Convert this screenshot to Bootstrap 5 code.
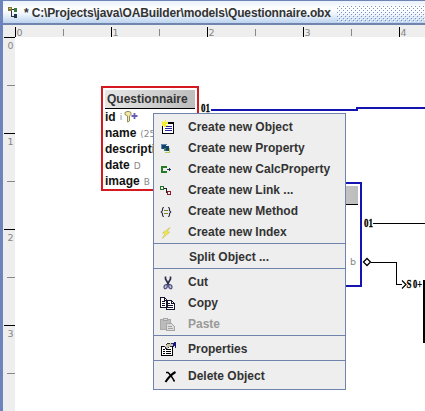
<!DOCTYPE html>
<html lang="en">
<head>
<meta charset="utf-8">
<title>Questionnaire.obx</title>
<link href="https://cdn.jsdelivr.net/npm/bootstrap@5.3.0/dist/css/bootstrap.min.css" rel="stylesheet">
<style>
body{width:425px;height:411px;font:bold 12px/15px "Liberation Sans",Arial,sans-serif;color:#333;background:#fff}
.frame{width:425px;height:411px;border-left:3px solid #6c83bd}
.titlebar{height:25px;border-top:1px solid #6f83b5;border-bottom:2px solid #7184ae;background:linear-gradient(#e9f2fd,#fff 35%,#eef4fc 60%,#bcd3ef);padding:2px 0 0 4px}
.titlebar span{margin-left:4px;white-space:pre;letter-spacing:-.15px}
.grip{margin-left:6px;height:19px}
.ruler-top{height:12px;background:#eee}
.ruler-left{width:12px;background:#eee}
svg{display:block;flex:none}
.num{font:9.5px "DejaVu Sans",sans-serif;fill:#858585}
.stage{background:#fff}
.entity{position:absolute;left:86px;top:49px;width:98px;height:105px;border:2px solid #d41a20;padding:2px 2px 0;color:#111}
.entity-head{height:19px;background:linear-gradient(100deg,#e7e7e7,#bcbcbc);border-bottom:1px solid #000;color:#333;padding:2px 0 0 2px}
.prop{height:16px;line-height:17px;white-space:nowrap}
.prop small{font:9px/17px "DejaVu Sans",sans-serif;color:#888;margin-left:4px}
.target{position:absolute;left:240px;top:145px;width:107px;height:105px;border:2px solid #1414b0;padding:2px 2px 0}
.links{position:absolute;left:0;top:0}
.role{font:bold 12px "Liberation Serif",serif;fill:#000;stroke:#000;stroke-width:.3px}
.ctx{position:absolute;left:138px;top:76px;width:193px;height:277px;border:1px solid #6f83ac;background:#eee;padding-top:3px}
.item{height:21px;padding:0 0 0 5px;white-space:nowrap}
.item svg{margin-right:11px;margin-left:1px;overflow:visible}
.rule{height:1px;background:#6f83ac;margin-bottom:3px}
.last-item{margin-top:5px}
.off{color:#999}
</style>
<script src="https://cdn.jsdelivr.net/npm/bootstrap@5.3.0/dist/js/bootstrap.bundle.min.js"></script>
</head>
<body class="m-0 overflow-hidden">
<div class="frame d-flex flex-column">
  <header class="titlebar d-flex align-items-center">
    <svg width="13" height="13" shape-rendering="crispEdges"><path d="M4 2.500H8M4.500 3V9.500H8" fill="none" stroke="#333"/><path fill="#7d7537" d="M1 0h4v4H1z"/><path fill="#397a42" d="M7 1h3v4H7z"/><path fill="#20364f" d="M7 7h3v4H7z"/><path fill="#d9b36c" d="M2 1h2v1H2z"/></svg>
    <span>* C:\Projects\java\OABuilder\models\Questionnaire.obx</span>
    <svg class="grip" width="94" height="19" shape-rendering="crispEdges"><defs><pattern id="dots" width="4" height="4" patternUnits="userSpaceOnUse"><path fill="#7a92c3" d="M0 0h1v1H0zM2 2h1v1H2z"/><path fill="#fff" d="M1 1h1v1H1zM3 3h1v1H3z"/></pattern></defs><path fill="url(#dots)" d="M0 1h94v17H0z"/></svg>
  </header>
  <div class="ruler-top">
    <svg width="422" height="12" shape-rendering="crispEdges"><path stroke="#000" d="M12.500 2V12M108.500 2V12M204.500 2V12M300.500 2V12M396.500 2V12"/><path stroke="#888" d="M60.500 4V11M156.500 4V11M252.500 4V11M348.500 4V11"/><g class="num"><text x="13.500" y="11">0</text><text x="109.500" y="11">1</text><text x="205.500" y="11">2</text><text x="301.500" y="11">3</text><text x="397.500" y="11">4</text></g></svg>
  </div>
  <div class="d-flex flex-grow-1">
    <div class="ruler-left">
      <svg width="12" height="374" shape-rendering="crispEdges"><path stroke="#000" d="M1 .5H12M1 96.500H12M1 192.500H12M1 288.500H12"/><path stroke="#888" d="M4 48.500H12M4 144.500H12M4 240.500H12M4 336.500H12"/><g class="num"><text x="4.500" y="12">0</text><text x="4.500" y="108">1</text><text x="4.500" y="204">2</text><text x="4.500" y="300">3</text></g></svg>
    </div>
    <main class="stage flex-grow-1 position-relative overflow-hidden">
      <section class="entity">
        <div class="entity-head">Questionnaire</div>
        <div class="prop d-flex">id <small>i</small><svg width="16" height="14"><path d="M3 3.500l2-1h2l2 1v2L7.500 7v5L5.500 13V7L3 5.500z" fill="#f1eaa5" stroke="#8a854f" stroke-width=".9"/><path d="M9.500 7h6M12.500 4v6" stroke="#6a60ad" stroke-width="1.800"/></svg></div>
        <div class="prop">name<small>(25</small></div>
        <div class="prop">description</div>
        <div class="prop">date<small>D</small></div>
        <div class="prop">image<small>B</small></div>
      </section>
      <section class="target"><div class="entity-head"></div></section>
      <svg class="links" width="410" height="374"><g fill="none" shape-rendering="crispEdges"><path stroke="#1414b0" stroke-width="2" d="M196 73H342V71H410"/><path stroke="#000" d="M358 186.500H410M356 225.500H381.500V247.500H387"/><path stroke="#000" stroke-width="2" d="M410 243.500H409V306"/></g><path fill="#fff" stroke="#000" stroke-width="1.300" d="M348.500 225l3.500-3.500 3.500 3.500-3.500 3.500z"/><path fill="none" stroke="#000" stroke-width="1.200" d="M387 243.500l4 4-4 4"/>
        <g class="role"><text x="186" y="75" textLength="9" lengthAdjust="spacingAndGlyphs">01</text><text x="349" y="190" textLength="9" lengthAdjust="spacingAndGlyphs">01</text><text x="391.500" y="251" textLength="5" lengthAdjust="spacingAndGlyphs">S</text><text x="398" y="251" textLength="9" lengthAdjust="spacingAndGlyphs">0+</text></g>
        <text class="num" x="335" y="228">b</text>
      </svg>
      <nav class="ctx">
        <div class="item d-flex align-items-center"><svg width="17" height="16" shape-rendering="crispEdges"><path fill="#fff" stroke="#000" d="M2.500 2.500h11v11h-11z"/><path fill="#000" d="M6 2h8v2H6z"/><path stroke="#2828a0" d="M5 6.500h7M5 8.500h7M5 10.500h7"/><path fill="#f2ef32" d="M2 1h1v1h2V0h1v2h2v2H6v1h2v1H6v1H4V6H2z"/></svg>Create new Object</div>
        <div class="item d-flex align-items-center"><svg width="17" height="16" shape-rendering="crispEdges"><path fill="none" stroke="#5b86b0" d="M1.500 8V3.500H7"/><path fill="none" stroke="#b7c654" d="M5 11.500h4.500V7"/><path fill="#153f6c" d="M2 4h4v1h3v5H4V8H2z"/><path fill="#3b8058" d="M4 7h2v3H4z"/></svg>Create new Property</div>
        <div class="item d-flex align-items-center"><svg width="17" height="16" shape-rendering="crispEdges"><path fill="none" stroke="#287b24" stroke-width="2" d="M7 5H2v5h5"/><path stroke="#1b385e" d="M7 7.500h4"/><path fill="#1b385e" d="M9 6h1v3H9z"/></svg>Create new CalcProperty</div>
        <div class="item d-flex align-items-center"><svg width="17" height="16" shape-rendering="crispEdges"><path fill="none" stroke="#222" d="M4 5.500h2.500v4H8"/><path fill="#eee" stroke="#227029" d="M.5 3.500h3v3h-3z"/><path fill="#eee" stroke="#8b1f2e" d="M7.500 8.500h3v3h-3z"/></svg>Create new Link ...</div>
        <div class="item d-flex align-items-center"><svg width="17" height="16"><path fill="none" stroke="#282840" stroke-width="1.100" d="M4 3.500Q2.500 3.500 2.500 5v1.500L1.200 8l1.300 1.500V11q0 1.500 1.500 1.500M8 3.500q1.500 0 1.500 1.500v1.500L10.800 8l-1.300 1.500V11q0 1.500-1.500 1.500"/><path stroke="#888238" d="M4 6.500h4M4 9.500h4"/></svg>Create new Method</div>
        <div class="item d-flex align-items-center"><svg width="17" height="16"><path fill="#f4ed4e" stroke="#c9bd54" stroke-width=".6" d="M10 2.500L2.500 8h2.800l-3 5.500 7.500-6.500H7l3-4.500z"/></svg>Create new Index</div>
        <div class="rule"></div>
        <div class="item d-flex align-items-center"><svg width="18" height="16"></svg>Split Object ...</div>
        <div class="rule"></div>
        <div class="item d-flex align-items-center"><svg width="17" height="16"><path fill="none" stroke="#30304e" stroke-width="1.700" d="M5.500 1.500v2.500L9 10M10.500 1.500v2.500L7 10"/><path fill="#c5c5dd" stroke="#4c4c7c" stroke-width="1.200" d="M7 9.500q-3 0-3 2.500t2 1.500 1-4zM9 9.500q3 0 3 2.500t-2 1.500-1-4z"/></svg>Cut</div>
        <div class="item d-flex align-items-center"><svg width="17" height="16" shape-rendering="crispEdges"><path fill="#fff" stroke="#141432" d="M.5 1.500h4l3 3v7h-7zM6.500 4.500h5l3 3v6h-8z"/><path fill="none" stroke="#141432" d="M4.500 2v2.500H7M11.500 5v2.500H14M2 5.500h3M2 7.500h3M2 9.500h3M8 9.500h5M8 11.500h5M8 7.500h2"/></svg>Copy</div>
        <div class="item off d-flex align-items-center"><svg width="17" height="16" shape-rendering="crispEdges"><path fill="#bcbcbc" stroke="#aaa" d="M.5 2.500h10v10H.5z"/><path fill="#ddd" stroke="#a5a5a5" d="M3.500 1.500h4v2h-4zM6.500 6.500h5l3 3v4h-8z"/><path stroke="#a5a5a5" d="M8 9.500h4M8 11.500h5"/></svg>Paste</div>
        <div class="rule"></div>
        <div class="item d-flex align-items-center"><svg width="17" height="16" shape-rendering="crispEdges"><path fill="#fff" stroke="#000" d="M1.500 4.500h11v9h-11z"/><path stroke="#000" d="M3 7.500h2M6 7.500h5M3 9.500h2M6 9.500h5M3 11.500h2M6 11.500h5"/><path fill="#c6c4b0" stroke="#333" d="M4 5l4-4h5v3h-3L7 7z" stroke-dasharray="2 1"/><path fill="#171788" d="M13 1h1V0h2v6h-1V4h-2z"/></svg>Properties</div>
        <div class="rule"></div>
        <div class="item last-item d-flex align-items-center"><svg width="17" height="16"><path fill="none" stroke="#000" stroke-width="1.600" d="M6 3.500H8Q11 6 14.500 12.500"/><path fill="none" stroke="#000" stroke-width="2" d="M15.500 3Q10 6 5.500 13"/></svg>Delete Object</div>
      </nav>
    </main>
  </div>
</div>
</body>
</html>
